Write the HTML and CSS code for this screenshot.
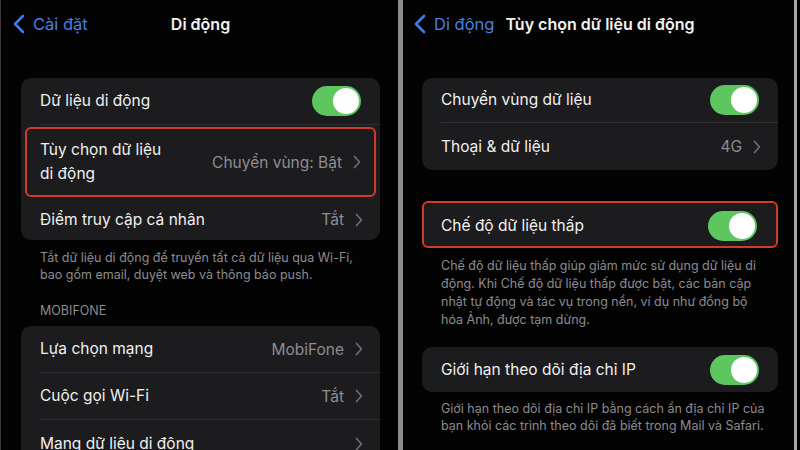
FILE: index.html
```html
<!DOCTYPE html>
<html lang="vi">
<head>
<meta charset="utf-8">
<link rel="stylesheet" href="styles.css">
</head>
<body>
<div class="screen">
  <section class="panel panel-left">
    <header class="nav">
      <div class="back">
        <svg class="back-ico" viewBox="0 0 12 20" width="12" height="20"><path d="M10 2 L2 10 L10 18" fill="none" stroke="#3f7ae6" stroke-width="2.6" stroke-linecap="round" stroke-linejoin="round"/></svg>
        <span>Cài đặt</span>
      </div>
      <div class="title">Di động</div>
    </header>

    <div class="card card-a">
      <div class="row h47 sep">
        <span class="label">Dữ liệu di động</span>
        <span class="toggle"><span class="knob"></span></span>
      </div>
      <div class="row h70 boxed">
        <span class="label two">Tùy chọn dữ liệu<br>di động</span>
        <span class="acc"><span class="val">Chuyển vùng: Bật</span><svg class="chev" viewBox="0 0 8 14" width="8" height="14"><path d="M1.5 1.5 L6.5 7 L1.5 12.5" fill="none" stroke="#6b6b70" stroke-width="1.8" stroke-linecap="round" stroke-linejoin="round"/></svg></span>
      </div>
      <div class="row h41">
        <span class="label">Điểm truy cập cá nhân</span>
        <span class="acc"><span class="val">Tắt</span><svg class="chev" viewBox="0 0 8 14" width="8" height="14"><path d="M1.5 1.5 L6.5 7 L1.5 12.5" fill="none" stroke="#6b6b70" stroke-width="1.8" stroke-linecap="round" stroke-linejoin="round"/></svg></span>
      </div>
    </div>
    <p class="foot foot-a">Tắt dữ liệu di động để truyền tất cả dữ liệu qua Wi-Fi,<br>bao gồm email, duyệt web và thông báo push.</p>
    <p class="section">MOBIFONE</p>
    <div class="card">
      <div class="row h47 sep">
        <span class="label">Lựa chọn mạng</span>
        <span class="acc"><span class="val">MobiFone</span><svg class="chev" viewBox="0 0 8 14" width="8" height="14"><path d="M1.5 1.5 L6.5 7 L1.5 12.5" fill="none" stroke="#6b6b70" stroke-width="1.8" stroke-linecap="round" stroke-linejoin="round"/></svg></span>
      </div>
      <div class="row h47 sep">
        <span class="label">Cuộc gọi Wi-Fi</span>
        <span class="acc"><span class="val">Tắt</span><svg class="chev" viewBox="0 0 8 14" width="8" height="14"><path d="M1.5 1.5 L6.5 7 L1.5 12.5" fill="none" stroke="#6b6b70" stroke-width="1.8" stroke-linecap="round" stroke-linejoin="round"/></svg></span>
      </div>
      <div class="row h47">
        <span class="label">Mạng dữ liệu di động</span>
        <span class="acc"><svg class="chev" viewBox="0 0 8 14" width="8" height="14"><path d="M1.5 1.5 L6.5 7 L1.5 12.5" fill="none" stroke="#6b6b70" stroke-width="1.8" stroke-linecap="round" stroke-linejoin="round"/></svg></span>
      </div>
    </div>
  </section>

  <div class="divider"></div>

  <section class="panel panel-right">
    <header class="nav">
      <div class="back">
        <svg class="back-ico" viewBox="0 0 12 20" width="12" height="20"><path d="M10 2 L2 10 L10 18" fill="none" stroke="#3f7ae6" stroke-width="2.6" stroke-linecap="round" stroke-linejoin="round"/></svg>
        <span>Di động</span>
      </div>
      <div class="title">Tùy chọn dữ liệu di động</div>
    </header>

    <div class="card card-a">
      <div class="row h45 sep">
        <span class="label">Chuyển vùng dữ liệu</span>
        <span class="toggle"><span class="knob"></span></span>
      </div>
      <div class="row h47">
        <span class="label">Thoại &amp; dữ liệu</span>
        <span class="acc"><span class="val">4G</span><svg class="chev" viewBox="0 0 8 14" width="8" height="14"><path d="M1.5 1.5 L6.5 7 L1.5 12.5" fill="none" stroke="#6b6b70" stroke-width="1.8" stroke-linecap="round" stroke-linejoin="round"/></svg></span>
      </div>
    </div>

    <div class="card card-boxed">
      <div class="row h43 low">
        <span class="label">Chế độ dữ liệu thấp</span>
        <span class="toggle"><span class="knob"></span></span>
      </div>
    </div>
    <p class="foot foot-b">Chế độ dữ liệu thấp giúp giảm mức sử dụng dữ liệu di<br>động. Khi Chế độ dữ liệu thấp được bật, các bản cập<br>nhật tự động và tác vụ trong nền, ví dụ như đồng bộ<br>hóa Ảnh, được tạm dừng.</p>

    <div class="card card-c">
      <div class="row h45">
        <span class="label">Giới hạn theo dõi địa chỉ IP</span>
        <span class="toggle"><span class="knob"></span></span>
      </div>
    </div>
    <p class="foot foot-c">Giới hạn theo dõi địa chỉ IP bằng cách ẩn địa chỉ IP của<br>bạn khỏi các trình theo dõi đã biết trong Mail và Safari.</p>
  </section>
</div>
</body>
</html>
```

FILE: styles.css
```css
* { box-sizing: border-box; }
html, body {
  margin: 0;
  padding: 0;
  background: #000;
}
body {
  font-family: Inter, "Noto Sans", "DejaVu Sans", sans-serif;
  color: #f2f2f2;
  width: 800px;
  height: 450px;
  overflow: hidden;
}
.screen {
  display: flex;
  width: 800px;
  height: 450px;
  overflow: hidden;
}
.panel {
  height: 450px;
  overflow: hidden;
  background: #030303;
}
.panel-left {
  width: 398px;
  border-left: 1px solid #3a3a3a;
  padding: 0 18px 0 20px;
}
.divider {
  width: 5px;
  background: #8c8c8c;
}
.panel-right {
  width: 394px;
  padding: 0 16px 0 19px;
  border-right: 3px solid #a8a8a8;
}
.nav {
  height: 46px;
  display: flex;
  align-items: center;
  position: relative;
  padding-top: 1px;
}
.back {
  display: flex;
  align-items: center;
  gap: 8px;
  color: #4a7fe3;
  font-size: 16.5px;
  margin-left: -8px;
}
.back-ico { display: block; }
.title {
  position: absolute;
  left: 0;
  right: 0;
  top: 1px;
  bottom: 0;
  display: flex;
  align-items: center;
  justify-content: center;
  font-size: 16px;
  font-weight: 600;
  pointer-events: none;
}

.card {
  background: #1c1c1e;
  border-radius: 10px;
}
.card-a { margin-top: 32px; }
.row {
  display: flex;
  align-items: center;
  justify-content: space-between;
  padding: 0 17px 0 19px;
  position: relative;
}
.h41 { height: 41px; }
.h43 { height: 43px; }
.h45 { height: 45px; }
.h47 { height: 47px; }
.h70 { height: 70px; }
.sep { border-bottom: 1px solid #303032; margin-left: 19px; padding-left: 0; }
.boxed {
  margin: 2px 4px;
  border: 2px solid #d43a2c;
  border-radius: 6px;
  padding: 0 13px 0 13px;
}
.card-boxed {
  margin-top: 31px;
  border: 2px solid #d43a2c;
  border-radius: 6px;
}
.card-boxed .row { padding: 0 17px 0 17px; }
.low { padding-top: 3px !important; }
.label {
  font-size: 15.5px;
  line-height: 24px;
  color: #f0f0f0;
}
.acc {
  display: flex;
  align-items: center;
  gap: 11px;
}
.val {
  font-size: 15.5px;
  color: #8d8d92;
}
.chev { display: block; }
.toggle {
  width: 49px;
  height: 30px;
  border-radius: 15px;
  background: #5ec65f;
  display: flex;
  align-items: center;
  justify-content: flex-end;
  padding: 2px;
  margin-right: 2px;
}
.knob {
  width: 26px;
  height: 26px;
  border-radius: 50%;
  background: #fff;
}
.foot {
  margin: 0;
  font-size: 12.5px;
  line-height: 17px;
  color: #8b8b90;
  padding-left: 19px;
}
.foot-a { margin-top: 9px; line-height: 17px; }
.section {
  margin: 20px 0 0;
  padding-left: 19px;
  font-size: 12.5px;
  color: #8b8b90;
  line-height: 16px;
}
.section + .card { margin-top: 7px; }
.foot-b { margin-top: 9px; line-height: 18px; }
.card-c { margin-top: 18px; }
.foot-c { margin-top: 8px; line-height: 17px; }
```
